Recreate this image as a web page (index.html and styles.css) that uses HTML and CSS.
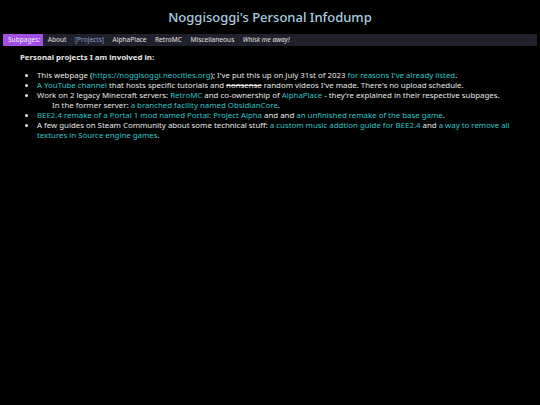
FILE: index.html
```html
<!DOCTYPE html>
<html>
<head>
<meta charset="utf-8">
<link rel="stylesheet" href="styles.css">
</head>
<body>
<h1 class="title">Noggisoggi's Personal Infodump</h1>
<nav class="nav">
  <span class="nav-label">Subpages:</span>
  <a class="nav-item">About</a>
  <a class="nav-item current">[Projects]</a>
  <a class="nav-item">AlphaPlace</a>
  <a class="nav-item">RetroMC</a>
  <a class="nav-item">Miscellaneous</a>
  <a class="nav-item whisk">Whisk me away!</a>
</nav>
<main class="content">
  <p class="heading">Personal projects I am involved in:</p>
  <ul class="list">
    <li>This webpage (<a class="link">https://noggisoggi.neocities.org</a>); I've put this up on July 31st of 2023 <a class="link">for reasons I've already listed</a>.</li>
    <li><a class="link">A YouTube channel</a> that hosts specific tutorials and <s>nonsense</s> random videos I've made. There's no upload schedule.</li>
    <li>Work on 2 legacy Minecraft servers: <a class="link">RetroMC</a> and co-ownership of <a class="link">AlphaPlace</a> - they're explained in their respective subpages.<br><span class="indent">In the former server: <a class="link">a branched facility named ObsidianCore</a>.</span></li>
    <li><a class="link">BEE2.4 remake of a Portal 1 mod named Portal: Project Alpha</a> and and <a class="link">an unfinished remake of the base game</a>.</li>
    <li>A few guides on Steam Community about some technical stuff: <a class="link">a custom music addtion guide for BEE2.4</a> and <a class="link">a way to remove all textures in Source engine games</a>.</li>
  </ul>
</main>
</body>
</html>
```
FILE: styles.css
```css
html, body {
  margin: 0;
  padding: 0;
  background: #000;
  color: #e8e8e8;
  font-family: "Noto Sans", "Open Sans", sans-serif;
}
body {
  padding: 0 3px;
}
.title {
  margin: 0;
  padding-top: 7px;
  height: 27px;
  text-align: center;
  font-size: 13px;
  font-weight: 500;
  color: #a9cfe0;
  line-height: 20px;
}
.nav {
  display: flex;
  align-items: center;
  gap: 8.5px;
  background: #20212c;
  height: 12px;
  font-size: 6.6px;
  line-height: 12px;
  color: #e0e0e0;
}
.nav-label {
  background: #a24fe6;
  color: #eee;
  padding: 0 3px 0 5px;
  margin-right: -4px;
}
.nav-item {
  color: #e0e0e0;
}
.nav-item.current {
  color: #8a9ed0;
}
.nav-item.whisk {
  font-style: italic;
}
.content {
  padding: 0 0 0 17px;
  font-size: 7.85px;
  line-height: 10px;
}
.heading {
  margin: 6px 0 0 0;
  font-weight: bold;
}
.list {
  margin: 8px 0 0 0;
  padding-left: 17px;
}
.list li {
  margin: 0;
}
.link {
  color: #2ec4c6;
}
.indent {
  padding-left: 15px;
}
```
